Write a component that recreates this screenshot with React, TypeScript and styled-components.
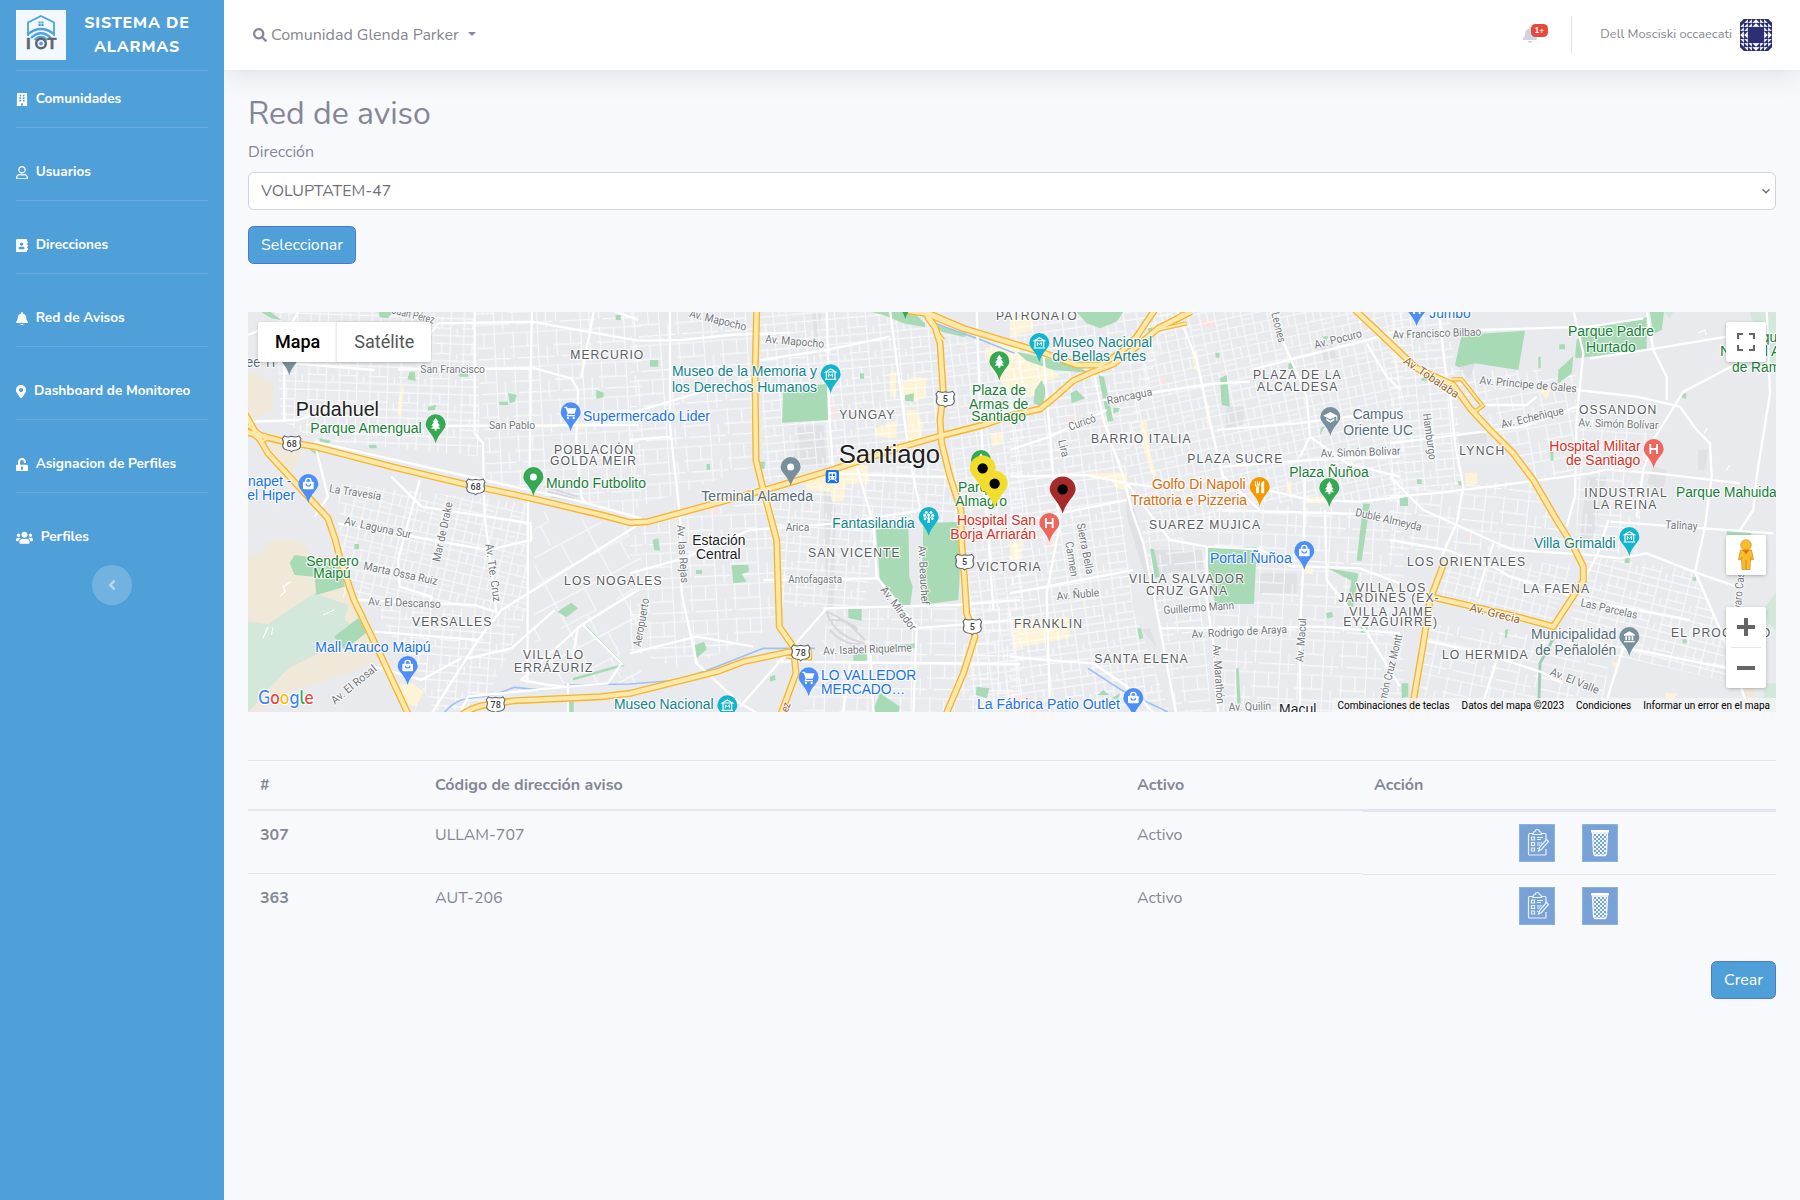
import React from "react";
import styled, { createGlobalStyle, css } from "styled-components";
import {
  FaBuilding, FaRegUser, FaAddressBook, FaBell, FaMapMarkerAlt, FaUnlockAlt, FaUsers, FaSearch, FaAngleLeft,
} from "react-icons/fa";

const sans = `Nunito, Lato, "Open Sans", sans-serif`;

const Global = createGlobalStyle`
  *, *::before, *::after { box-sizing: border-box; }
  body { margin: 0; background: #f8f9fc; color: #858796; font: 400 16px/1.5 ${sans}; }
`;

const Page = styled.div`display: flex; min-height: 1200px; width: 100%;`;

const Sidebar = styled.nav`
  position: relative; z-index: 1;
  width: 224px; flex: none; padding: 0 16px; background: #4f9fd9; color: #fff;
  display: flex; flex-direction: column;
`;
const Brand = styled.div`height: 70px; display: flex; align-items: center;`;
const BrandName = styled.div`
  flex: 1; text-align: center; font-weight: 800; font-size: 16px; letter-spacing: 0.8px; text-transform: uppercase;
`;
const Rule = styled.hr<{ $gap?: number }>`
  width: 100%; height: 1px; flex: none; border: 0; margin: 0 0 ${(p) => p.$gap ?? 0}px; background: rgba(255, 255, 255, 0.15);
`;
const NavItem = styled.a<{ $icon: number }>`
  height: 56px; padding-top: 1px; display: flex; align-items: center; gap: 7.7px; color: #fff; text-decoration: none;
  font-size: 13.6px; font-weight: 700; white-space: nowrap;
  svg { height: 13.6px; width: ${(p) => p.$icon}px; flex: none; }
`;
const Toggle = styled.button`
  width: 40px; height: 40px; align-self: center; border: 0; border-radius: 50%; padding: 0;
  background: rgba(255, 255, 255, 0.2); color: rgba(255, 255, 255, 0.5);
  display: grid; place-items: center; font-size: 16px;
`;

const Main = styled.div`flex: 1; min-width: 0; display: flex; flex-direction: column;`;
const Topbar = styled.header`
  height: 70px; flex: none; background: #fff; padding: 0 28px 0 29px; display: flex; align-items: center;
  box-shadow: 0 2.4px 28px rgba(58, 59, 69, 0.15);
`;
const Community = styled.div`
  display: flex; align-items: center; gap: 4px; font-size: 16px; white-space: nowrap;
  svg { width: 14px; height: 14px; }
`;
const Caret = styled.i`
  margin: 0 0 2px 5px; border: 4.5px solid transparent; border-top-color: currentColor; border-bottom: 0;
`;
const Bell = styled.div`
  position: relative; margin-left: auto; color: #d1d3e2; display: flex;
  svg { width: 14px; height: 16px; }
`;
const Badge = styled.span`
  position: absolute; left: 7.5px; top: -3px; height: 13px; width: 17px; border-radius: 4.5px; background: #e74a3b; color: #fff;
  font: 700 8.5px/13px ${sans}; text-align: center;
`;
const Divider = styled.div`width: 1px; height: 38px; margin: 0 28px 0 34px; background: #e3e6f0;`;
const UserName = styled.span`font-size: 12.8px; margin-right: 8px; white-space: nowrap;`;

const Content = styled.main`padding: 25px 24px 24px; display: flex; flex-direction: column;`;
const Title = styled.h2`margin: 0 0 7px; font-size: 32px; font-weight: 400; line-height: 38.4px;`;
const Label = styled.label`height: 24px; margin-bottom: 7.6px;`;
const SelectBox = styled.div`
  position: relative; margin-bottom: 16px;
  svg { position: absolute; right: 5px; top: 15px; pointer-events: none; }
`;
const Select = styled.select`
  display: block; appearance: none; height: 38px; width: 100%; padding: 6px 12px; border: 1px solid #d1d3e2; border-radius: 5.6px;
  background: #fff; color: #6e707e; font: 400 16px/1.5 ${sans};
`;
const Button = styled.button<{ $w: number; $end?: boolean }>`
  height: 38px; width: ${(p) => p.$w}px; padding: 0; border: 1px solid #4e73df; border-radius: 5.6px; background: #4f9fd9; color: #fff;
  font: 400 16px/1.5 ${sans}; align-self: ${(p) => (p.$end ? "flex-end" : "flex-start")};
`;

const line = "#e3e6f0";
const Table = styled.div`display: flex; flex-direction: column; margin: 48px 0 25px;`;
const cols = css`display: grid; grid-template-columns: 175px 702px 237px 1fr;`;
const HeadRow = styled.div`${cols} height: 51px; border-top: 1px solid ${line}; border-bottom: 2px solid ${line}; font-weight: 700;`;
const Row = styled.div<{ $first?: boolean }>`${cols} height: ${(p) => (p.$first ? 62 : 63)}px;`;
const Cell = styled.div<{ $bold?: boolean; $line?: boolean }>`
  padding: 12px; font-weight: ${(p) => (p.$bold ? 700 : 400)};
  border-top: ${(p) => (p.$line ? `1px solid ${line}` : 0)};
`;
const ActionCell = styled.div<{ $drop?: boolean }>`
  margin-top: ${(p) => (p.$drop ? 1 : 0)}px; border-top: 1px solid ${line};
  display: flex; justify-content: center; align-items: flex-start; gap: 27px; padding: 12px 1px 0 0;
`;
const IconButton = styled.button`width: 36px; height: 38px; padding: 0; border: 0; background: none; display: block;`;

/* ---------- map ---------- */

const MapFrame = styled.section`
  position: relative; width: 100%; height: 400px; margin-top: 48px; overflow: hidden; background: #e8eaed;
  > svg { display: block; width: 1528px; height: 400px; }
`;
const panelShadow = css`background: #fff; border-radius: 2px; box-shadow: 0 1px 4px -1px rgba(0, 0, 0, 0.3);`;
const MapTypes = styled.div`
  ${panelShadow} position: absolute; left: 10px; top: 10px; height: 40px; display: flex;
  font: 400 18px/40px Roboto, sans-serif; color: #565656;
`;
const MapType = styled.div<{ $on?: boolean }>`
  padding: 0 17px; font-weight: ${(p) => (p.$on ? 500 : 400)}; color: ${(p) => (p.$on ? "#000" : "#565656")};
  & + & { box-shadow: -1px 0 2px rgba(0, 0, 0, 0.12); }
`;
const Control = styled.div<{ $top: number; $h?: number }>`
  ${panelShadow} position: absolute; right: 10px; top: ${(p) => p.$top}px; width: 40px; height: ${(p) => p.$h ?? 40}px;
  display: grid; place-items: center; box-shadow: 0 1px 4px -1px rgba(0, 0, 0, 0.4);
`;
const Credits = styled.div`
  position: absolute; right: 0; bottom: 0; height: 14px; display: flex; font: 400 10px/16px Roboto, sans-serif; color: #000;
  background: rgba(245, 245, 245, 0.75);
  span { padding: 0 6px; white-space: nowrap; }
`;

const shift = [0, 1146, 2286, 3426];
type PanelPath = [number, string];

const highways: PanelPath[] = [
  [0, "M-10 365L100 393 200 410 430 470 640 520 850 565 1060 615 1146 638 1200 635 1291 610 1446 568 1586 530 1746 482 1946 415 2076 378 2206 345 2290 316 2376 297 2416 265 2476 212 2536 185 2596 162 2666 110 2730 55 2830 5"],
  [0, "M-10 310L60 430 180 560 240 625 262 690 280 760 318 870 400 1040 484 1220"],
  [0, "M635 1220C680 1180 740 1182 800 1172L1060 1160 1146 1150 1406 1085 1486 1055 1626 1025 1690 1028"],
  [1, "M380 0L375 200 378 450 400 540 440 690 448 950 490 1010 498 1090 450 1220"],
  [1, "M880 0L915 50 930 100 940 250 930 330 935 400 960 500 993 600 995 700 1003 800 1010 910 1035 980 1000 1090 945 1220"],
  [1, "M820 0L900 12 1000 55 1140 98 1240 128 1340 165 1410 165 1470 130 1520 80 1574 0"],
  [2, "M1035 0L1120 80 1220 175 1330 225 1380 295 1440 360 1510 430 1570 510 1640 630 1690 710 1720 770 1720 812 1630 950 1520 920 1270 862"],
  [3, "M165 750L120 870 100 1000 62 1220"],
];
const ramps: PanelPath[] = [
  [0, "M-10 370L55 375M-5 345L60 385 40 395-10 355"],
  [3, "M185 208L215 208 278 288 250 308"],
  [1, "M470 1040L540 1045 540 1020M940 90L890 25M1000 60L950 40 880 10"],
  [2, "M330 150L440 60 530 40M450 55L520 10"],
];

const avenues: PanelPath[] = [
  [0, "M540 80L570 40 850 35 1170 92 1300 90 1446 75 1630 68M852 0L848 190 845 480M680 0L680 370 705 400 710 620 745 910M450 178L860 175 970 205 990 240 985 400 1000 560 1012 580M1038 0L1000 200M0 335L150 330 240 300M560 348L1170 345M840 565L838 1120M1170 645L760 900 690 990 545 1220M200 395L640 495 1000 575 1180 625M660 1045L790 1015 920 900M430 500L520 590 850 640M515 510L450 750 455 830 550 860 548 900M270 640L720 720 850 690 848 640M330 870L680 885 740 905M380 965L690 990M1005 945L1125 1065M990 950L975 1040M960 1220L960 1120M1170 840L1000 945 820 1110 900 1125 960 1130M150 6L110 80 108 330M200 400L240 560 200 620M130 160L380 180M0 75L60 50 150 45M640 1200L660 1160 960 1130 1080 1120 1120 1060M640 1045L520 1110 380 1070M1090 0L1170 30"],
  [1, "M120 0L120 350 150 620 155 850 200 1060 330 1180 400 1220M0 310L200 250 380 200M590 0L600 350 610 480M590 895L480 1020 330 1190M0 790L160 745 360 660 620 640 880 600M580 895L980 885 1170 870M680 470L730 640 740 800 860 950 850 1220M400 810L740 805M850 955L1170 930M440 1055L1170 1062M780 0L830 380 850 500 880 640M1040 0L1050 300 1070 600 1090 900M0 390L120 380M390 150L590 120 780 80M600 490L860 500 960 500M0 1030L200 980 370 1010M720 1000L730 1206M660 1060L640 1206"],
  [2, "M250 180L280 330 340 500 365 600 400 700 440 900 500 1220M0 640L150 610 350 570M350 520L480 690 590 710 750 718 840 768 1050 775 1170 820M500 0L560 150 600 340 640 500 750 600M280 270L600 222 720 215M0 420L120 380 290 300M720 180L1070 90 1170 60M770 540L900 570 1050 575 1180 560M885 480L880 760 870 950 870 1220M590 710L590 870 610 1000 625 1220M945 600L950 810 1060 950 1170 1130M620 600L1050 612 1200 650M450 955L940 950 1170 970M0 850L370 780M0 1040L110 1050 250 1060 380 1150 440 1220M0 500L230 495 350 520 520 540M620 360L860 340 1170 300M640 470L900 450 1170 440M780 0L890 260 900 380 870 440M900 380L1010 460 1170 500M1070 100L1130 200 1170 240M100 130L130 500 150 640 110 850 120 1206"],
  [3, "M145 0L165 170 180 250 195 400 220 530 200 640 150 750M0 560L130 550 300 530 600 490 650 478 800 490 1050 520M550 0L580 130 560 320 555 560 530 650M770 0L790 120 830 200 830 270M560 240L740 260 870 290 920 360 960 400 965 500 945 650 915 785 1000 980 1070 1180M1080 140L880 245 790 390 760 480 740 620M1130 0L1140 250 1100 500 1090 600 1050 660M370 720L600 735 690 745 770 730 910 785 1040 830M0 500L100 600 300 690 370 720M660 635L940 655 1150 670M0 690L170 720 310 770 360 800 580 870 900 930M310 700L260 860M100 990L280 1030 450 1085 520 1120M320 1050L270 1206M700 1010L640 1206M690 1010L1040 1080M655 630L620 740 580 810M0 400L400 350 560 290M265 60L600 50 760 25M600 145L800 115 1010 80M270 285L410 285 440 260"],
];

/* [panel, points, rotation, tile] */
const districts: [number, string, number, string][] = [
  [0, "80,0 680,0 700,440 200,390 100,330", 2, "a"],
  [0, "680,0 1180,0 1180,620 720,520", -3, "b"],
  [0, "270,520 840,580 840,900 740,900 280,860", 13, "c"],
  [0, "380,890 840,900 700,1200 560,1200", 4, "a"],
  [0, "860,600 1180,660 1180,1120 860,1120", -28, "d"],
  [1, "0,0 370,0 370,470 0,600", -4, "b"],
  [1, "390,0 930,0 930,370 400,520", -5, "a"],
  [1, "0,650 430,560 440,950 160,1080 0,1020", -3, "b"],
  [1, "420,560 960,430 990,640 740,640 700,890 450,890", 4, "a"],
  [1, "600,900 1160,890 1160,1206 520,1206", 1, "b"],
  [1, "940,70 1180,110 1180,1206 1020,1206", -7, "c"],
  [2, "0,0 480,0 330,520 370,900 480,1206 0,1206", -8, "a"],
  [2, "420,0 1180,0 1180,580 760,580 480,680 340,480", -12, "c"],
  [2, "590,580 1180,600 1180,1206 620,1206", 3, "b"],
  [2, "390,620 590,720 600,1206 500,1206", -6, "b"],
  [3, "0,0 180,0 220,520 0,560", -5, "a"],
  [3, "180,180 560,180 550,500 420,500 240,300", -10, "b"],
  [3, "0,540 430,510 560,720 0,720", 6, "b"],
  [3, "560,280 780,280 740,730 560,730", 4, "b"],
  [3, "150,760 550,760 480,940 120,860", 14, "c"],
  [3, "590,740 920,780 1000,980 1030,1120 520,1000", 14, "a"],
  [3, "110,940 660,1000 640,1206 80,1206", 12, "b"],
];

const greens: PanelPath[] = [
  [0, "M125 760L140 735 205 745 280 775 290 830 205 855 200 800 140 795ZM258 980L330 925 365 960 290 1020ZM392 6H435L420 24 395 22ZM485 185H500L503 213 478 208ZM630 188H660V200H635ZM780 248L806 255 800 275 785 280ZM752 275H780V285H755ZM1045 240L1067 248V262L1045 267ZM928 905L970 878 990 895 955 922ZM215 385L250 392 240 402 215 398ZM362 405H386V415H365ZM540 290L565 285 560 300 540 302ZM1103 15H1118V30H1103ZM320 702H333V718H318ZM960 1175H977V1206H960ZM30 0H60L100 30 70 25ZM180 415L215 425 205 435Z"],
  [1, "M460 235L590 222 594 330 456 338ZM60 150H85V170H60ZM738 660L835 640 838 800 848 830 840 888 815 885 750 810ZM880 640L985 635 990 770 985 870 895 882 875 860ZM305 765H355L357 785 335 792 350 815 310 820ZM655 897H695V932L655 925ZM195 1005L222 995 230 1018 200 1045ZM733 1190L750 1150 810 1190 805 1206H735ZM670 1035L710 1030V1052H670ZM748 1010L860 1000V1015H750ZM725 6H850L885 40 885 52 820 40 760 15ZM910 42L1010 70 1005 82 935 65ZM390 455H405L403 478 392 475ZM825 255L852 250 850 275 825 272ZM690 190H702V206H690ZM1040 1130L1078 1135 1070 1165 1037 1155ZM68 690L85 685 90 722 73 720ZM230 462H240V480H230ZM198 780H216V792H198ZM420 1100L435 1095 437 1110 420 1115Z"],
  [2, "M200 6H340L320 35 270 55 230 40ZM20 125L200 165 235 188 130 180 50 152ZM95 210L108 240 98 290 70 280 75 240ZM182 250L200 240 225 265 185 280ZM265 195L282 200 310 332 293 335ZM630 205L650 195 660 290 635 285ZM592 712H740L732 882H615L592 760ZM420 715L432 718 450 800 435 805ZM382 955L393 955 400 985 388 988ZM678 1075H686L692 1182 682 1180ZM1060 580L1080 582 1055 752 1040 752ZM952 775L1045 790 1030 890 1008 892 1025 812ZM930 375L932 355 945 348ZM948 910L965 905 970 920 952 926ZM262 1155L280 1140 298 1155ZM305 1165L330 1150 325 1170ZM835 160L852 158V178H835ZM615 128H628V143H617ZM935 80L955 78 950 92ZM1052 950H1073V968H1052ZM310 293L330 295 325 305 310 310ZM413 55L428 52 420 80Z"],
  [3, "M215 75L405 62 385 180 255 160 205 172 195 165ZM555 140L560 90 590 50 770 22V120L560 145ZM780 6H822L815 60 790 72ZM505 180L550 138 545 190 503 222ZM1010 662H1085L1080 700 1010 682ZM30 562H54V588H30ZM80 508H95V522H82ZM705 740H720L718 760H704ZM875 252L890 250 888 266 877 264ZM480 425H490V452H482ZM205 513H215V526H205ZM95 203H110V212H95ZM507 103H525V118H508ZM345 960L355 957 350 985 345 985ZM878 988H890V1000H878ZM35 1120H55V1160L35 1165ZM908 802H918V812H908ZM445 140H452V175H445Z"],
];
const paleGreens: PanelPath[] = [
  [0, "M0 935L60 942 200 850 300 885 290 930 335 960 250 1010 120 1075 0 1206Z"],
  [3, "M1080 0H1160V180L1130 150 1120 60 1085 30ZM1125 890L1158 850V960L1135 940ZM1120 1120H1158V1206H1125ZM820 6H850L840 25Z"],
];
const sands: PanelPath[] = [
  [0, "M0 190L30 195 75 220V300L0 335ZM50 370L150 385 160 420 130 500 80 440ZM0 735L45 730 50 700 90 688 150 692 200 740 290 730 310 830 400 1040 330 1080 140 1140 30 1206H0Z"],
  [3, "M1060 1130L1092 1135V1206H1070Z"],
];
const yellows: PanelPath[] = [
  [0, "M455 1125L495 1120 527 1145 505 1190 470 1178ZM455 250L470 215 460 320 447 310ZM985 338H1005V356H985ZM880 345H930V352H880Z"],
  [1, "M810 225L850 200 890 205 885 260 860 275 810 262ZM735 355L800 330V385L735 380ZM525 512L640 460 712 465 720 520 650 522 640 572 607 575 600 545 530 540ZM1065 115L1170 90V210L1130 240 1080 170ZM1080 370L1115 368 1120 400 1088 412ZM1140 700H1170V745L1140 740ZM780 185H798V260H780ZM830 300L860 300 880 345 870 400 835 390Z"],
  [2, "M0 130L110 160 150 200 100 215 60 262 0 240ZM8 935L180 920 178 985 10 1015ZM240 490L350 488 355 542 320 535 300 510 245 505ZM390 335L410 330 415 400 440 500 425 495 395 400ZM0 695H35V750H0ZM880 775H910V792H885ZM585 280L597 285 600 345 590 345ZM830 515H845V550H830ZM890 560H960V580H890ZM0 20H70V60L0 80ZM545 130L560 125 570 185 555 180Z"],
  [3, "M225 490L262 487V522L228 528ZM825 1150H862L855 1165H828ZM665 1055L690 1060 680 1090ZM445 235L480 240 470 270Z"],
];
const pinks: PanelPath[] = [
  [1, "M600 280L615 285V325L602 325ZM240 595L262 593 265 615 243 618ZM1132 1150H1170V1206H1140Z"],
  [2, "M0 1145L100 1170V1206H0ZM105 685L140 692 138 712 108 708ZM575 30L612 25 616 50 580 52ZM272 318H290V338H274ZM680 460L712 455 715 472 680 474ZM448 207L466 204V222H450ZM168 322H192V345H170Z"],
  [3, "M230 672H244V682H232Z"],
];
const grays: PanelPath[] = [
  [1, "M580 520L617 520 612 890 590 895ZM500 350L580 345 590 470 490 470ZM975 805L990 800V832H972ZM545 6H575L560 120Z"],
  [2, "M650 290L702 290 698 360 645 362ZM395 960L420 955 440 1010ZM420 720L580 720V790L440 790ZM745 790H860V850H745ZM930 100L960 90 985 150 935 155ZM350 570L375 600 445 870 430 880 350 620Z"],
  [3, "M215 80L255 160 240 210 210 180ZM590 500L650 500 600 720 570 690ZM790 470L830 480 820 540 770 520ZM925 420L955 420 945 480 925 480ZM205 370H290V400H205Z"],
];

type Kind = "poi" | "area" | "road" | "city" | "town" | "hub" | "brown";
/* [panel, x, baseline, text, kind, length, colour, rotation] */
type MapText = [number, number, number, string, Kind, number, string?, number?];
const green = "#188038", teal = "#12858d", blue = "#1a73e8", slate = "#546e7a", red = "#d93025", orange = "#d56e0c";

const texts: MapText[] = [
  [0, 430, 10, "Juan Pérez", "road", 130, "", 14],
  [0, -6, 172, "ee TI", "poi", 88, slate],
  [0, 517, 190, "San Francisco", "road", 194],
  [0, 967, 147, "MERCURIO", "area", 219],
  [0, 143, 318, "Pudahuel", "town", 250],
  [0, 187, 369, "Parque Amengual", "poi", 334, green],
  [0, 723, 356, "San Pablo", "road", 138],
  [0, 1005, 333, "Supermercado Lider", "poi", 381, blue],
  [0, 918, 432, "POBLACIÓN", "area", 238],
  [0, 906, 466, "GOLDA MEIR", "area", 258],
  [0, 894, 534, "Mundo Futbolito", "poi", 300, green],
  [0, 0, 529, "napet -", "poi", 130, blue],
  [0, -2, 570, "el Hiper", "poi", 143, blue],
  [0, 242, 546, "La Travesía", "road", 158, "", 9],
  [0, 287, 643, "Av. Laguna Sur", "road", 205, "", 12],
  [0, 576, 757, "Mar de Drake", "road", 182, "", -78],
  [0, 712, 703, "Av. Tte. Cruz", "road", 175, "", 82],
  [0, 175, 768, "Sendero", "poi", 157, green],
  [0, 196, 804, "Maipú", "poi", 112, green],
  [0, 345, 778, "Marta Ossa Ruiz", "road", 226, "", 12],
  [0, 360, 886, "Av. El Descanso", "road", 218, "", 2],
  [0, 492, 948, "VERSALLES", "area", 238],
  [0, 948, 825, "LOS NOGALES", "area", 293],
  [0, 202, 1026, "Mall Arauco Maipú", "poi", 346, blue],
  [0, 825, 1047, "VILLA LO", "area", 181],
  [0, 798, 1086, "ERRÁZURIZ", "area", 235],
  [0, 260, 1184, "Av. El Rosal", "road", 165, "", -39],
  [0, 1098, 1197, "Museo Nacional", "poi", 299, teal],
  [1, 176, 20, "Av. Mapocho", "road", 175, "", 14],
  [1, 405, 98, "Av. Mapocho", "road", 177, "", 5],
  [1, 126, 198, "Museo de la Memoria y", "poi", 435, teal],
  [1, 126, 246, "los Derechos Humanos", "poi", 435, teal],
  [1, 628, 327, "YUNGAY", "area", 165],
  [1, 626, 460, "Santiago", "city", 304],
  [1, 214, 572, "Terminal Alameda", "poi", 335, slate],
  [1, 467, 663, "Arica", "road", 71],
  [1, 607, 654, "Fantasilandia", "poi", 247, teal],
  [1, 187, 704, "Estación", "hub", 159],
  [1, 198, 746, "Central", "hub", 134],
  [1, 534, 741, "SAN VICENTE", "area", 275],
  [1, 475, 820, "Antofagasta", "road", 161],
  [1, 141, 645, "Av. las Rejas", "road", 175, "", 86],
  [1, 32, 1012, "Aeropuerto", "road", 147, "", -80],
  [1, 750, 840, "Av. Mirador", "road", 155, "", 53],
  [1, 865, 707, "Av. Beauchef", "road", 178, "", 87],
  [1, 580, 1034, "Av. Isabel Riquelme", "road", 266, "", -2],
  [1, 573, 1110, "LO VALLEDOR", "poi", 286, blue],
  [1, 573, 1152, "MERCADO…", "poi", 253, blue],
  [1, 473, 1208, "ez", "brown", 28, "", -70],
  [1, 1026, 255, "Plaza de", "poi", 162, green],
  [1, 1017, 297, "Armas de", "poi", 178, green],
  [1, 1024, 333, "Santiago", "poi", 164, green],
  [1, 984, 546, "Parque", "poi", 135, green],
  [1, 976, 588, "Almagro", "poi", 155, green],
  [1, 981, 645, "Hospital San", "poi", 237, red],
  [1, 961, 687, "Borja Arriarán", "poi", 257, red],
  [1, 1098, 30, "PATRONATO", "area", 242],
  [1, 1040, 783, "VICTORIA", "area", 192],
  [1, 1152, 954, "FRANKLIN", "area", 204],
  [1, 1041, 1197, "La Fábrica Patio Outlet", "poi", 429, blue],
  [2, 127, 112, "Museo Nacional", "poi", 299, teal],
  [2, 127, 153, "de Bellas Artes", "poi", 281, teal],
  [2, 293, 284, "Rancagua", "road", 138, "", -12],
  [2, 180, 362, "Curicó", "road", 84, "", -19],
  [2, 144, 392, "Lira", "road", 52, "", 76],
  [2, 243, 399, "BARRIO ITALIA", "area", 299],
  [2, 532, 458, "PLAZA SUCRE", "area", 285],
  [2, 426, 537, "Golfo Di Napoli", "poi", 281, orange],
  [2, 362, 585, "Trattoria e Pizzeria", "poi", 349, orange],
  [2, 417, 657, "SUAREZ MUJICA", "area", 333],
  [2, 200, 642, "Sierra Bella", "road", 155, "", 79],
  [2, 166, 697, "Carmen", "road", 105, "", 81],
  [2, 357, 819, "VILLA SALVADOR", "area", 345],
  [2, 408, 855, "CRUZ GANA", "area", 243],
  [2, 141, 870, "Av. Ñuble", "road", 128, "", -5],
  [2, 461, 912, "Guillermo Mann", "road", 212, "", -4],
  [2, 545, 984, "Av. Rodrigo de Araya", "road", 287, "", -3],
  [2, 253, 1059, "SANTA ELENA", "area", 280],
  [2, 608, 1005, "Av. Marathón", "road", 178, "", 86],
  [2, 880, 1057, "Av. Macul", "road", 132, "", -86],
  [2, 656, 1203, "Av. Quilín", "road", 128, "", -2],
  [2, 807, 1212, "Macul", "hub", 112],
  [2, 600, 759, "Portal Ñuñoa", "poi", 245, blue],
  [2, 838, 501, "Plaza Ñuñoa", "poi", 238, green],
  [2, 729, 206, "PLAZA DE LA", "area", 263],
  [2, 741, 243, "ALCALDESA", "area", 241],
  [2, 916, 116, "Av. Pocuro", "road", 146, "", -14],
  [2, 784, 10, "Leones", "road", 92, "", 76],
  [2, 1028, 327, "Campus", "poi", 152, slate],
  [2, 1000, 375, "Oriente UC", "poi", 209, slate],
  [2, 932, 442, "Av. Simón Bolívar", "road", 240, "", -2],
  [2, 1034, 617, "Dublé Almeyda", "road", 203, "", 13],
  [2, 1038, 846, "VILLA LOS", "area", 208],
  [2, 985, 876, "JARDINES (EX-", "area", 301],
  [2, 1018, 918, "VILLA JAIME", "area", 248],
  [2, 1000, 948, "EYZAGUIRRE)", "area", 281],
  [2, 1128, 1175, "món Cruz Montt", "road", 205, "", -76],
  [2, 1148, 84, "Av", "road", 34],
  [3, 118, 23, "Jumbo", "poi", 124, blue],
  [3, 8, 86, "Av Francisco Bilbao", "road", 266, "", -2],
  [3, 38, 158, "Av. Tobalaba", "brown", 192, "", 34],
  [3, 268, 222, "Av. Príncipe de Gales", "road", 292, "", 5],
  [3, 336, 355, "Av. Echeñique", "road", 192, "", -13],
  [3, 98, 312, "Hamburgo", "road", 140, "", 82],
  [3, 208, 435, "LYNCH", "area", 135],
  [3, 567, 312, "OSSANDON", "area", 232],
  [3, 565, 349, "Av. Simón Bolívar", "road", 240, "", 2],
  [3, 478, 423, "Hospital Militar", "poi", 274, red],
  [3, 528, 465, "de Santiago", "poi", 223, red],
  [3, 534, 79, "Parque Padre", "poi", 258, green],
  [3, 588, 126, "Hurtado", "poi", 149, green],
  [3, 1050, 97, "Parque", "poi", 135, green],
  [3, 990, 138, "Natural A.", "poi", 195, green],
  [3, 1026, 186, "de Ramón", "poi", 190, green],
  [3, 583, 561, "INDUSTRIAL", "area", 247],
  [3, 609, 597, "LA REINA", "area", 190],
  [3, 858, 561, "Parque Mahuida", "poi", 302, green],
  [3, 825, 655, "Talinay", "road", 97, "", 3],
  [3, 432, 714, "Villa Grimaldi", "poi", 245, teal],
  [3, 51, 768, "LOS ORIENTALES", "area", 354],
  [3, 399, 849, "LA FAENA", "area", 198],
  [3, 570, 888, "Las Parcelas", "road", 174, "", 13],
  [3, 237, 903, "Av. Grecia", "brown", 155, "", 14],
  [3, 843, 981, "EL PROGRESO", "area", 298],
  [3, 423, 987, "Municipalidad", "poi", 256, slate],
  [3, 436, 1035, "de Peñalolén", "poi", 243, slate],
  [3, 156, 1047, "LO HERMIDA", "area", 257],
  [3, 478, 1094, "Av. El Valle", "road", 155, "", 22],
  [3, 1052, 900, "varo Casanova", "road", 190, "", -84],
];

const textStyle: Record<Kind, { size: number; fill: string; halo: number; font?: string }> = {
  poi: { size: 42, fill: green, halo: 7 },
  area: { size: 36.5, fill: "#5a5d61", halo: 7 },
  road: { size: 34, fill: "#74777c", halo: 6, font: "Roboto" },
  brown: { size: 34, fill: "#94652f", halo: 6, font: "Roboto" },
  city: { size: 77, fill: "#202124", halo: 7 },
  town: { size: 60, fill: "#202124", halo: 7 },
  hub: { size: 42, fill: "#202124", halo: 7 },
};

type Glyph = "tree" | "dot" | "cart" | "bag" | "museum" | "hall" | "H" | "food" | "cap" | "fountain" | "none";
const pins: [number, number, number, string, Glyph][] = [
  [0, 124, 139, "#78909c", "none"], [0, 563, 343, "#34a853", "tree"], [0, 856, 501, "#34a853", "dot"],
  [0, 968, 307, "#4e8ff7", "cart"], [0, 181, 522, "#4e8ff7", "bag"], [0, 479, 1068, "#4e8ff7", "bag"],
  [1, 602, 193, "#12b5cb", "museum"], [1, 482, 471, "#78909c", "dot"], [1, 896, 621, "#12b5cb", "fountain"],
  [1, 292, 1186, "#12b5cb", "museum"], [1, 536, 1102, "#4e8ff7", "cart"], [1, 1108, 154, "#34a853", "tree"],
  [1, 1053, 450, "#34a853", "tree"], [1, 826, -30, "#34a853", "none"], [2, 88, 99, "#12b5cb", "museum"],
  [2, 118, 639, "#ee675c", "H"], [2, 749, 531, "#f29900", "food"], [2, 958, 534, "#34a853", "tree"],
  [2, 883, 723, "#4e8ff7", "bag"], [2, 370, 1164, "#4e8ff7", "bag"], [2, 961, 321, "#78909c", "cap"],
  [3, 80, -8, "#4e8ff7", "cart"], [3, 791, 417, "#ee675c", "H"], [3, 718, 681, "#12b5cb", "museum"], [3, 718, 981, "#78909c", "hall"],
];

const PinGlyph = ({ kind }: { kind: Glyph }) => {
  switch (kind) {
    case "tree": return <path d="M0-20L9-7H5L13 4H7L14 13H3V19H-3V13H-14L-7 4H-13L-5-7H-9Z" fill="#fff" />;
    case "dot": return <circle r="10.5" fill="#fff" />;
    case "cart": return <g fill="#fff"><path d="M-19-17H-11L-9-12H17L12 4H-7L-8 8H13V12H-13L-9 3-15-13H-19Z" /><circle cx="-8" cy="17" r="3.5" /><circle cx="9" cy="17" r="3.5" /></g>;
    case "bag": return <g><rect x="-16" y="-7" width="32" height="23" rx="3" fill="#fff" /><path d="M-8-5V-9A8 8 0 0 1 8-9V-5" fill="none" stroke="#fff" strokeWidth="4" /><path d="M-7-1A7 7 0 0 0 7-1" fill="none" stroke="#4e8ff7" strokeWidth="3.5" /></g>;
    case "museum": return <g fill="none" stroke="#fff" strokeWidth="3.5"><path d="M-15-7L0-16 15-7ZM-13-6V13M13-6V13M-17 15H17" /><path d="M-6 9V-2L0 5 6-2V9" strokeWidth="3" /></g>;
    case "hall": return <path d="M-16-8L0-17 16-8V-4H-16ZM-12-2H-7V10H-12ZM-3-2H3V10H-3ZM7-2H12V10H7ZM-16 12H16V16H-16Z" fill="#fff" />;
    case "H": return <path d="M-10-15V15M10-15V15M-10 0H10" stroke="#fff" strokeWidth="5.5" fill="none" />;
    case "food": return <path d="M-13-17V-6A6 6 0 0 0-4-1V18H-9V-1M-1-17V-6A6 6 0 0 1-5-1M-7-17V-3M6 18V-12Q12-18 12-18V18Z" fill="#fff" stroke="#fff" strokeWidth="2.5" />;
    case "cap": return <path d="M-21-4L0-15 21-4 0 7ZM-12 4L0 11 12 4V10L0 17-12 10ZM18-3H21V11H18Z" fill="#fff" />;
    case "fountain": return (
      <g fill="#fff">
        <circle cx="-12" cy="-5" r="4.5" /><circle cx="12" cy="-5" r="4.5" /><circle cx="-7" cy="-14" r="4.5" /><circle cx="7" cy="-14" r="4.5" />
        <circle cx="-11" cy="5" r="4" /><circle cx="11" cy="5" r="4" /><circle cy="-6" r="4.5" /><path d="M-1.500-4H1.500L4 18H-4Z" />
        <path d="M-9-3L0 8 9-3" fill="none" stroke="#fff" strokeWidth="2.5" />
      </g>
    );
    default: return null;
  }
};

const pinShape = "M-30 0A30 30 0 1 1 30 0C30 17 8 27 0 57C-8 27-30 17-30 0Z";

const Shield = ({ x, y, n }: { x: number; y: number; n: string }) => (
  <g transform={`translate(${x} ${y})`}>
    <path d="M-22-22Q-12-17 0-21 12-17 22-22L28-14Q22-4 27 6 27 18 14 20 4 20 0 25-4 20-14 20-27 18-27 6-22-4-28-14Z" fill="#fff" stroke="#606368" strokeWidth="3.2" />
    <text y="10" textAnchor="middle" fontFamily="Roboto" fontWeight="500" fontSize="27" fill="#3c4043">{n}</text>
  </g>
);

const Layer = ({ paths, ...rest }: { paths: PanelPath[] } & React.SVGProps<SVGGElement>) => (
  <g {...rest}>{paths.map(([p, d], i) => <path key={i} d={d} transform={`translate(${shift[p]} 0)`} />)}</g>
);

const tiles: Record<string, [number, number, string]> = {
  a: [92, 76, "M0 4H92M0 34H60M0 56H92M6 0V76M32 0V34M58 0V76M78 34V56"],
  b: [130, 104, "M0 6H130M0 48H84M20 82H130M10 0V82M52 6V48M84 0V104M110 48V104"],
  c: [78, 62, "M0 5H78M0 36H78M5 0V62M28 5V36M50 0V62M50 50H78"],
  d: [190, 150, "M0 10H190M0 84H120M20 0V150M120 10V84M90 84V150"],
};

const CityMap = () => (
  <svg viewBox="0 6 4584 1200">
    <defs>
      {districts.map(([, , r, t], i) => {
        const [w, h, d] = tiles[t];
        return (
          <pattern key={i} id={`grid${i}`} width={w} height={h} patternUnits="userSpaceOnUse" patternTransform={`rotate(${r})`}>
            <path d={d} fill="none" stroke="#fff" strokeWidth="3.3" />
          </pattern>
        );
      })}
    </defs>
    <Layer paths={sands} fill="#f0e8d8" />
    <Layer paths={paleGreens} fill="#d3e7da" />
    <Layer paths={grays} fill="#dfe1e5" />
    <Layer paths={yellows} fill="#fdf3d6" />
    <Layer paths={pinks} fill="#fbe3e1" />
    {districts.map(([p, pts], i) => (
      <polygon key={i} points={pts} transform={`translate(${shift[p]} 0)`} fill={`url(#grid${i})`} opacity="0.75" />
    ))}
    <Layer paths={greens} fill="#a8dab5" />
    <g fill="none" strokeLinejoin="round">
      <path d="M1012 950L1125 1065 975 1108" stroke="#a8dab5" strokeWidth="8" />
      <path d="M3916 985L3876 1060 3872 1206" stroke="#a3cdb8" strokeWidth="9" />
      <path d="M590 1206C640 1150 680 1170 750 1150L800 1132 880 1140 960 1125 1146 1122 1296 1110 1406 1070 1546 1015 1700 1015M2060 40L2200 90 2300 130M2520 1075L2620 1140 2760 1206" stroke="#9fc0f7" strokeWidth="5" />
      <path d="M1735 905Q1760 980 1850 1000M1735 905Q1800 930 1850 990M1740 930Q1800 925 1830 960M1745 960Q1790 1010 1840 1000" stroke="#d6d8dc" strokeWidth="6" />
      <path d="M900 545L980 565M890 530L990 560M910 560L985 572" stroke="#d6d8dc" strokeWidth="5" />
      <path d="M95 860L112 845 105 830 128 815M225 915L258 900M45 985L60 950M70 975L75 952M4350 70L4370 60 4375 75M4368 370L4378 355M4435 480L4445 465" stroke="#fff" strokeWidth="3.5" />
    </g>
    <Layer paths={avenues} fill="none" stroke="#fff" strokeWidth="7" strokeLinejoin="round" />
    <Layer paths={highways} fill="none" stroke="#f7b42c" strokeWidth="21" strokeLinejoin="round" />
    <Layer paths={ramps} fill="none" stroke="#f7b42c" strokeWidth="13" />
    <Layer paths={highways} fill="none" stroke="#fde8ac" strokeWidth="13" strokeLinejoin="round" />
    <Layer paths={ramps} fill="none" stroke="#fde8ac" strokeWidth="6" />
    {pins.map(([p, x, y, c, g], i) => (
      <g key={i} transform={`translate(${shift[p] + x} ${y})`}><path d={pinShape} fill={c} /><PinGlyph kind={g} /></g>
    ))}
    <g transform="translate(1753 500)">
      <rect x="-20" y="-20" width="40" height="40" rx="6" fill="#1a73e8" />
      <rect x="-12" y="-14" width="24" height="23" rx="4" fill="#fff" />
      <path d="M-8 9L-13 15M8 9L13 15" stroke="#fff" strokeWidth="3.5" />
      <path d="M-8-9H-2V-2H-8ZM2-9H8V-2H2Z" fill="#1a73e8" /><circle cx="-6" cy="4" r="2" fill="#1a73e8" /><circle cx="6" cy="4" r="2" fill="#1a73e8" />
    </g>
    {texts.map(([p, x, y, s, k, len, c, r], i) => {
      const st = textStyle[k];
      return (
        <text key={i} transform={`translate(${shift[p] + x} ${y}) rotate(${r ?? 0})`} fontSize={st.size} fill={c || st.fill}
          fontFamily={st.font ? `${st.font}, sans-serif` : `"Liberation Sans", Arial, sans-serif`}
          textLength={len} lengthAdjust={k === "area" ? "spacing" : "spacingAndGlyphs"}
          stroke="#fff" strokeOpacity="0.85" strokeWidth={st.halo} strokeLinejoin="round" paintOrder="stroke">{s}</text>
      );
    })}
    <Shield x={131} y={400} n="68" /><Shield x={683} y={529} n="68" /><Shield x={743} y={1183} n="78" />
    <Shield x={2092} y={266} n="5" /><Shield x={2150} y={755} n="5" /><Shield x={2173} y={949} n="5" /><Shield x={1658} y={1027} n="78" />
    {[[2204, 475, "#f3dd2c"], [2240, 521, "#f3dd2c"], [2444, 538, "#a52a2a"]].map(([x, y, c], i) => (
      <g key={i} transform={`translate(${x} ${y}) scale(1.29)`}><path d={pinShape} fill={c as string} /><circle r="12" fill="#000" /></g>
    ))}
    <text x="30" y="1182" fontFamily="Nunito, sans-serif" fontSize="57" fontWeight="600" textLength="167" lengthAdjust="spacingAndGlyphs"
      stroke="#fff" strokeWidth="7" paintOrder="stroke" strokeLinejoin="round">
      <tspan fill="#4285f4">G</tspan><tspan fill="#ea4335">o</tspan><tspan fill="#fbbc04">o</tspan><tspan fill="#4285f4">g</tspan><tspan fill="#34a853">l</tspan><tspan fill="#ea4335">e</tspan>
    </text>
  </svg>
);

/* ---------- small drawings ---------- */

const Logo = () => (
  <svg width="50" height="50" viewBox="0 0 50 50">
    <rect width="50" height="50" fill="#f2f8fe" />
    <g fill="none" stroke="#4aa3e0" strokeWidth="1.8">
      <path d="M12 26V12.5L25 6 38 12.5V26" />
      <path d="M12 24Q25 14 38 24" strokeWidth="2.4" /><path d="M15 28Q25 18.500 35 28" strokeWidth="2.4" />
      <path d="M18.500 30Q25 24 31.500 30" strokeWidth="2.2" />
    </g>
    <path d="M22.500 11.500H24.700V13.500H22.500ZM25.300 11.500H27.500V13.500H25.300ZM22.500 14H24.700V16H22.500ZM25.300 14H27.500V16H25.300Z" fill="#4aa3e0" />
    <g fontFamily="Lato, sans-serif" fontWeight="900" fontSize="15.5" fill="#63646a" stroke="#63646a" strokeWidth=".5">
      <text x="10" y="39">I</text><text x="31.500" y="39" textLength="9" lengthAdjust="spacingAndGlyphs">T</text>
    </g>
    <circle cx="25" cy="33.500" r="4.800" fill="#f2f8fe" stroke="#63646a" strokeWidth="2.500" /><circle cx="25" cy="33.500" r="1.900" fill="#4aa3e0" />
  </svg>
);

const Avatar = () => {
  const cells: React.ReactNode[] = [];
  for (let r = 0; r < 8; r++)
    for (let c = 0; c < 8; c++) {
      if (r > 1 && r < 6 && c > 1 && c < 6) continue;
      const x = c * 4, y = r * 4, left = c < 4, up = r < 4;
      const outer = (c === 0 || c === 7) && (r === 0 || r === 7);
      const side = c < 2 || c > 5;
      const ix = left ? x + 4 : x, ox = left ? x : x + 4;
      const iy = up ? y + 4 : y, oy = up ? y : y + 4;
      cells.push(
        <path key={`${r}${c}`} d={outer
          ? `M${ix} ${iy}L${ix} ${oy}L${ox} ${iy}Z`
          : side ? `M${ox} ${oy}V${iy}L${ix} ${oy}Z` : `M${ox} ${oy}H${ix}L${ox} ${iy}Z`} />,
      );
    }
  return (
    <svg width="32" height="32" viewBox="0 0 32 32" fill="#2b2f74" stroke="#2b2f74" strokeWidth=".3">
      {cells}<rect x="8" y="8" width="16" height="16" />
    </svg>
  );
};

const IconTile = () => (<><rect width="36" height="38" fill="#8fb1de" /><rect x="1" y="1" width="34" height="36" fill="#78a1d6" /></>);

const EditIcon = () => (
  <svg width="36" height="38" viewBox="0 0 36 38">
    <IconTile />
    <g fill="none" stroke="#e9f1fb" strokeWidth="1.200">
      <path d="M14 9.500H10.500Q9.500 9.500 9.500 10.500V30Q9.500 31 10.500 31H26Q27 31 27 30V25M27 17V10.500Q27 9.500 26 9.500H22.500" />
      <path d="M14 10.500Q14 7.500 16 7.500 16.500 5.500 18.300 5.500 20 5.500 20.500 7.500 22.500 7.500 22.500 10.500Z" />
      <path d="M12.500 13H15.500V16H12.500ZM12.500 18.500H15.500V21.500H12.500ZM12.500 24H15.500V27H12.500ZM18 13.500H24M18 15.500H22M18 19H23M18 21H21M18 24.500H19.500" />
      <path d="M19.500 27L20.500 23.500 27.500 15.500 29.500 17.500 22.500 25.500Z" fill="#78a1d6" />
    </g>
  </svg>
);

const TrashIcon = () => (
  <svg width="36" height="38" viewBox="0 0 36 38">
    <defs><pattern id="mesh" width="4" height="4" patternUnits="userSpaceOnUse"><path d="M0 0H2V2H0ZM2 2H4V4H2Z" fill="#eef4fc" /></pattern></defs>
    <IconTile />
    <path d="M10.500 9H25.500L24.500 29Q24.300 31.500 22.500 31.500H13.500Q11.700 31.500 11.500 29Z" fill="url(#mesh)" stroke="#f4f8fd" strokeWidth="1.300" />
    <path d="M9 6H27V8.500H9Z" fill="#fff" />
  </svg>
);

const Pegman = () => (
  <svg width="20" height="32" viewBox="0 0 20 32">
    <circle cx="10" cy="6" r="5.300" fill="#fbbc2c" stroke="#c58a1a" strokeWidth=".6" />
    <path d="M4.500 11H15.500L17.500 20.500 15.500 21 14.500 18 14 30.500H6L5.500 18 4.500 21 2.500 20.500Z" fill="#fbbc2c" stroke="#c58a1a" strokeWidth=".7" />
    <path d="M6.500 11L10 15.500 13.500 11Z" fill="#e8710a" /><path d="M10 21V30" stroke="#c58a1a" />
  </svg>
);

const ZoomDrawing = () => (
  <svg width="40" height="81" viewBox="0 0 40 81">
    <path d="M11 20H29M20 11V29M11 61H29" stroke="#666" strokeWidth="4" /><path d="M5 40.500H35" stroke="#e6e6e6" />
  </svg>
);

const Fullscreen = () => (
  <svg width="18" height="18" viewBox="0 0 18 18"><path d="M1 6V1H6M12 1H17V6M17 12V17H12M6 17H1V12" fill="none" stroke="#666" strokeWidth="2.200" /></svg>
);

const Chevron = () => (
  <svg width="10" height="8" viewBox="0 0 10 8"><path d="M1.500 2.200L5 5.700 8.500 2.200" fill="none" stroke="#6e707e" strokeWidth="1.500" /></svg>
);

/* [icon, label, icon width] */
const nav: [React.ReactNode, string, number][] = [
  [<FaBuilding />, "Comunidades", 12], [<FaRegUser />, "Usuarios", 12], [<FaAddressBook />, "Direcciones", 12],
  [<FaBell />, "Red de Avisos", 12], [<FaMapMarkerAlt />, "Dashboard de Monitoreo", 10.2],
  [<FaUnlockAlt />, "Asignacion de Perfiles", 12], [<FaUsers />, "Perfiles", 17],
];
const rows = [["307", "ULLAM-707", "Activo"], ["363", "AUT-206", "Activo"]];

export default function App() {
  return (
    <>
      <Global />
      <Page>
        <Sidebar>
          <Brand><Logo /><BrandName>Sistema de Alarmas</BrandName></Brand>
          <Rule />
          {nav.map(([icon, text, width], i) => (
            <React.Fragment key={text}>
              <NavItem $icon={width}>{icon}<span>{text}</span></NavItem>
              {i < nav.length - 1 && <Rule $gap={16} />}
            </React.Fragment>
          ))}
          <Toggle><FaAngleLeft /></Toggle>
        </Sidebar>
        <Main>
          <Topbar>
            <Community><FaSearch /><span>Comunidad Glenda Parker</span><Caret /></Community>
            <Bell><FaBell /><Badge>1+</Badge></Bell>
            <Divider />
            <UserName>Dell Mosciski occaecati</UserName>
            <Avatar />
          </Topbar>
          <Content>
            <Title>Red de aviso</Title>
            <Label>Dirección</Label>
            <SelectBox><Select><option>VOLUPTATEM-47</option></Select><Chevron /></SelectBox>
            <Button $w={108}>Seleccionar</Button>
            <MapFrame>
              <CityMap />
              <MapTypes><MapType $on>Mapa</MapType><MapType>Satélite</MapType></MapTypes>
              <Control $top={10}><Fullscreen /></Control>
              <Control $top={223}><Pegman /></Control>
              <Control $top={295} $h={81}><ZoomDrawing /></Control>
              <Credits><span>Combinaciones de teclas</span><span>Datos del mapa ©2023</span><span>Condiciones</span><span>Informar un error en el mapa</span></Credits>
            </MapFrame>
            <Table>
              <HeadRow><Cell $bold>#</Cell><Cell $bold>Código de dirección aviso</Cell><Cell $bold>Activo</Cell><Cell $bold>Acción</Cell></HeadRow>
              {rows.map(([id, code, state], i) => (
                <Row key={id} $first={i === 0}>
                  <Cell $bold $line={i > 0}>{id}</Cell><Cell $line={i > 0}>{code}</Cell><Cell $line={i > 0}>{state}</Cell>
                  <ActionCell $drop={i > 0}><IconButton><EditIcon /></IconButton><IconButton><TrashIcon /></IconButton></ActionCell>
                </Row>
              ))}
            </Table>
            <Button $w={65} $end>Crear</Button>
          </Content>
        </Main>
      </Page>
    </>
  );
}
